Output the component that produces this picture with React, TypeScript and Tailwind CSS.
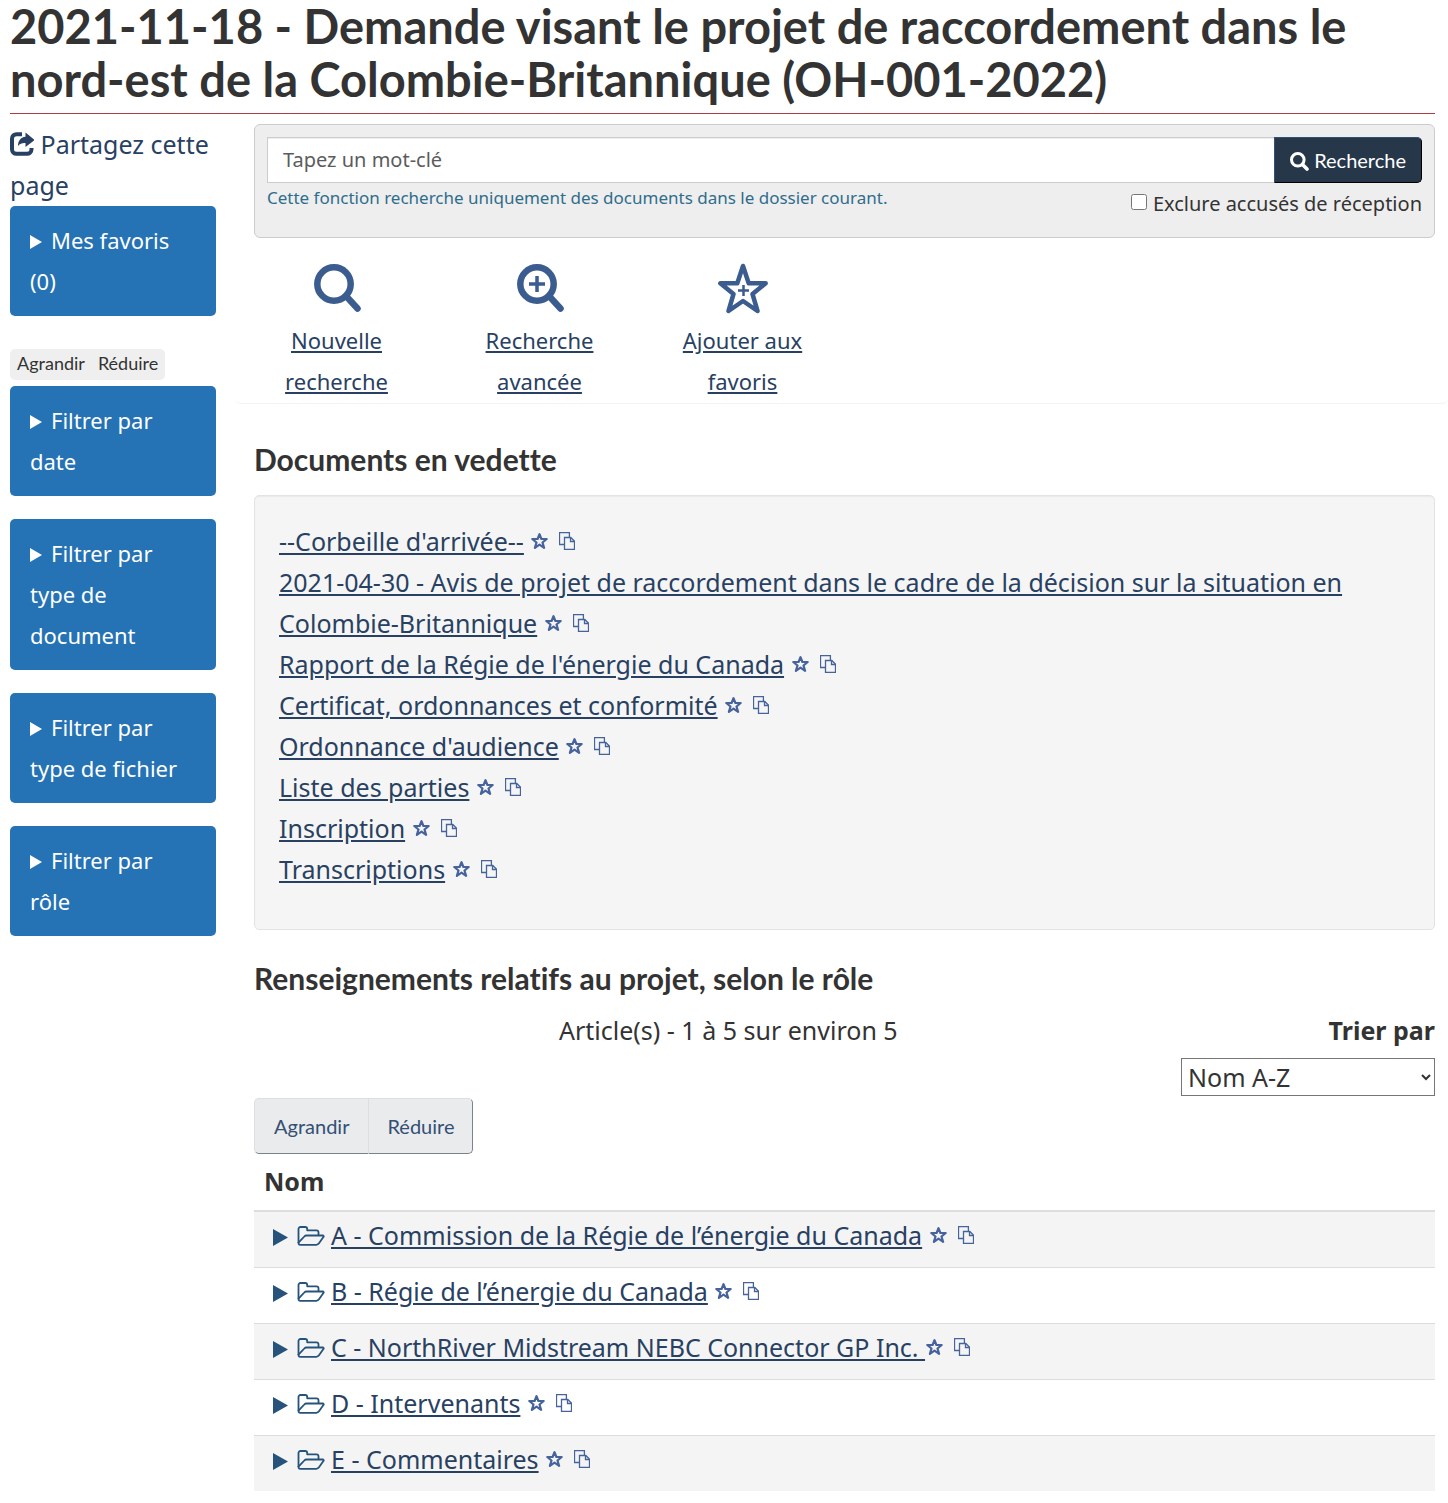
import type { ReactNode } from "react";

const documents = [
  "--Corbeille d'arrivée--",
  "2021-04-30 - Avis de projet de raccordement dans le cadre de la décision sur la situation en Colombie-Britannique",
  "Rapport de la Régie de l'énergie du Canada",
  "Certificat, ordonnances et conformité",
  "Ordonnance d'audience",
  "Liste des parties",
  "Inscription",
  "Transcriptions",
];

const folders = [
  "A - Commission de la Régie de l’énergie du Canada",
  "B - Régie de l’énergie du Canada",
  "C - NorthRiver Midstream NEBC Connector GP Inc. ",
  "D - Intervenants",
  "E - Commentaires",
];

const filters = [
  "Filtrer par date",
  "Filtrer par type de document",
  "Filtrer par type de fichier",
  "Filtrer par rôle",
];

function ShareIcon() {
  return (
    <svg viewBox="0 0 24 24" className="inline-block size-6 align-[-2px]" fill="none" aria-hidden="true">
      <path
        d="M12 2.200H6.500A4.500 4.500 0 0 0 2 6.700v10.600a4.500 4.500 0 0 0 4.500 4.500H17a4.500 4.500 0 0 0 4.500-4.500V16"
        stroke="currentColor"
        strokeWidth="4"
      />
      <path d="M15.500.5 24.500 8l-9 7v-4c-3.500-.2-5.300.5-7.500 3C8 9 10.500 5.200 15.500 4.800z" fill="currentColor" />
    </svg>
  );
}

function SearchIcon() {
  return (
    <svg viewBox="0 0 19 19" className="inline-block size-[19px] align-[-3px]" fill="none" stroke="currentColor" aria-hidden="true">
      <circle cx="7.800" cy="7.800" r="6.300" strokeWidth="3" />
      <path d="m12.500 12.500 4.500 4.500" strokeWidth="3.600" strokeLinecap="round" />
    </svg>
  );
}

function FolderIcon() {
  return (
    <svg
      viewBox="0 0 28 20"
      className="mr-[6px] inline-block h-5 w-7 align-[-1px]"
      fill="none"
      stroke="#26537c"
      strokeWidth="1.800"
      strokeLinejoin="round"
      aria-hidden="true"
    >
      <path d="M1.500 17V3a2 2 0 0 1 2-2h4.700a2 2 0 0 1 2 2v1.300h9.300a2 2 0 0 1 2 2v3" />
      <path d="M1.500 16.700 7.300 10.500a3 3 0 0 1 2.200-1h16.200c1 0 1.300.8.7 1.600L22 17.300a3.500 3.500 0 0 1-2.700 1.500h-16c-1 0-1.800-.8-1.800-2.100z" />
    </svg>
  );
}

function MagnifierIcon({ plus = false }: { plus?: boolean }) {
  return (
    <svg viewBox="0 0 48 50" className="h-[50px] w-12" fill="none" stroke="#3b5c8f" aria-hidden="true">
      <circle cx="21" cy="21" r="16.700" strokeWidth="6.500" />
      <path d="m33 33 11.500 12.500" strokeWidth="6.500" strokeLinecap="round" />
      {plus && <path d="M13 21h16M21 13v16" strokeWidth="3.500" />}
    </svg>
  );
}

function BigStarIcon() {
  return (
    <svg viewBox="0 0 52 52" className="size-[52px]" fill="none" stroke="#3b5c8f" aria-hidden="true">
      <path
        d="m26 3 5.700 17.300h17L35.500 31l5 17L26 38l-14.500 10 5-17L3.300 20.300h17z"
        strokeWidth="4.500"
        strokeLinejoin="round"
      />
      <path d="M21 27.500h11M26.500 22v11" strokeWidth="2.500" />
    </svg>
  );
}

function ItemActions() {
  return (
    <span className="ml-px inline-flex gap-[11px] align-[1px] text-[#46639c]">
      <button type="button" aria-label="Ajouter aux favoris">
        <svg viewBox="0 0 17 18" className="h-[18px] w-[17px]" fill="none" stroke="currentColor">
          <path
            d="m8.500 2.200 1.900 4.800h5.300l-4.200 3.500 1.600 5.300-4.600-3.100-4.600 3.100 1.600-5.300L1.300 7h5.300z"
            strokeWidth="2.200"
            strokeLinejoin="round"
          />
        </svg>
      </button>
      <button type="button" aria-label="Copier le lien">
        <svg viewBox="0 0 16 18" className="h-[18px] w-4" fill="none" stroke="currentColor" strokeWidth="1.300">
          <path d="M5.500 12.500h-5V.600h9.900v4.500" />
          <path d="M5.500 5.500h6.300l3.700 3.700v8.200h-10z" />
          <path d="M11.500 5.500v4h4" />
        </svg>
      </button>
    </span>
  );
}

function TextLink({ children }: { children: ReactNode }) {
  return (
    <a href="#" className="text-[#284162] underline">
      {children}
    </a>
  );
}

function SidePanel({ title }: { title: string }) {
  return (
    <details className="rounded-[5px] bg-[#2572b4] px-5 py-[14px] text-[22px] leading-[41px] text-white">
      <summary className="list-none">
        <svg viewBox="0 0 12 14" className="mr-[9px] inline-block h-[14px] w-3 align-[0px]" fill="currentColor" aria-hidden="true">
          <path d="M0 0v14l12-7z" />
        </svg>
        {title}
      </summary>
    </details>
  );
}

function Shortcut({ icon, label }: { icon: ReactNode; label: string }) {
  return (
    <a href="#" className="flex w-[203px] flex-col items-center px-10 text-center text-[22px] leading-[41px] text-[#284162]">
      <span className="flex h-[57px] items-start">{icon}</span>
      <span className="underline">{label}</span>
    </a>
  );
}

function SectionTitle({ children }: { children: ReactNode }) {
  return <h2 className="font-[Lato] text-3xl leading-[34px] font-bold [font-variant-ligatures:none]">{children}</h2>;
}

function Sidebar() {
  return (
    <aside className="w-[206px] shrink-0">
      <a href="#" className="block text-[#284162]">
        <ShareIcon /> Partagez cette page
      </a>
      <SidePanel title="Mes favoris (0)" />
      <div className="mt-[33px] mb-[6px] flex w-fit gap-[13px] rounded-[5px] bg-[#efefef] px-[7px] pb-[2px] font-[Lato] text-lg leading-[29px]">
        <button type="button">Agrandir</button>
        <button type="button">Réduire</button>
      </div>
      <div className="flex flex-col gap-[23px]">
        {filters.map((title) => (
          <SidePanel key={title} title={title} />
        ))}
      </div>
    </aside>
  );
}

function SearchForm() {
  return (
    <form className="rounded-md border border-[#ccc] bg-[#eee] p-3 pb-[13px] text-xl leading-[41px]">
      <div className="flex h-[46px]">
        <input
          type="search"
          aria-label="Tapez un mot-clé"
          placeholder="Tapez un mot-clé"
          className="min-w-0 flex-1 border border-r-0 border-[#ccc] bg-white px-[15px] leading-7 shadow-[inset_0_1px_1px_rgba(0,0,0,0.075)] placeholder:text-[#5c5c5c]"
        />
        <button
          type="submit"
          className="rounded-r-[5px] border border-t-[#335075] border-r-black border-b-black border-l-[#335075] bg-[#26374a] px-[15px] font-[Lato] leading-7 text-white"
        >
          <SearchIcon /> Recherche
        </button>
      </div>
      <div className="flex justify-between">
        <p className="text-[17px] leading-[29px] text-[#2f6d8c]">
          Cette fonction recherche uniquement des documents dans le dossier courant.
        </p>
        <label className="flex items-center gap-[6px]">
          <input type="checkbox" className="mb-1 size-4" />
          Exclure accusés de réception
        </label>
      </div>
    </form>
  );
}

export default function App() {
  return (
    <div className="bg-white pr-[13px] pb-3 pl-[10px] font-['Noto_Sans',sans-serif] text-[25px] leading-[41px] text-[#333]">
      <h1 className="border-b border-[#af3c43] pb-[7px] font-[Lato] text-[47px] leading-[53px] font-bold [font-variant-ligatures:none]">
        2021-11-18 - Demande visant le projet de raccordement dans le nord-est de la Colombie-Britannique (OH-001-2022)
      </h1>

      <div className="flex gap-[38px] pt-[10px]">
        <Sidebar />
        <main className="min-w-0 flex-1">
          <SearchForm />

          <nav className="-mr-[13px] -ml-[19px] flex rounded-md border-b border-[#f3f3f3] pt-[25px] pb-px">
            <Shortcut icon={<MagnifierIcon />} label="Nouvelle recherche" />
            <Shortcut icon={<MagnifierIcon plus />} label="Recherche avancée" />
            <Shortcut icon={<BigStarIcon />} label="Ajouter aux favoris" />
          </nav>

          <div className="mt-[38px]">
            <SectionTitle>Documents en vedette</SectionTitle>
          </div>
          <ul className="mt-[19px] rounded-[5px] border border-[#e3e3e3] bg-[#f5f5f5] px-6 pt-[25px] pb-[39px] shadow-[inset_0_1px_1px_rgba(0,0,0,0.05)]">
            {documents.map((name) => (
              <li key={name}>
                <TextLink>{name}</TextLink> <ItemActions />
              </li>
            ))}
          </ul>

          <div className="mt-[31px]">
            <SectionTitle>Renseignements relatifs au projet, selon le rôle</SectionTitle>
          </div>
          <div className="mt-[15px] grid grid-cols-[305px_1fr_254px]">
            <p className="col-start-2">Article(s) - 1 à 5 sur environ 5</p>
            <label htmlFor="sort" className="text-right font-bold">
              Trier par
            </label>
            <select
              id="sort"
              className="col-start-3 mt-[7px] h-[38px] border border-[#767676] bg-white px-[2px] leading-[34px]"
            >
              <option>Nom A-Z</option>
              <option>Nom Z-A</option>
            </select>
          </div>

          <div className="mt-[2px] flex w-fit font-[Lato] text-xl leading-[54px] text-[#335075]">
            <button
              type="button"
              className="rounded-l-[5px] border border-r-0 border-[#dcdee1] border-b-[#7c828a] bg-[#eaebed] px-[19px]"
            >
              Agrandir
            </button>
            <button
              type="button"
              className="rounded-r-[5px] border border-[#dcdee1] border-r-[#7c828a] border-b-[#7c828a] bg-[#eaebed] px-[18px]"
            >
              Réduire
            </button>
          </div>

          <table className="w-full border-collapse">
            <thead>
              <tr className="border-b-2 border-[#ddd]">
                <th className="px-[10px] pt-[7px] pb-2 text-left">Nom</th>
              </tr>
            </thead>
            <tbody>
              {folders.map((name) => (
                <tr key={name} className="border-b border-[#ddd] last:border-b-0 odd:bg-[#f4f4f4]">
                  <td className="px-[19px] pt-[3px] pb-[11px]">
                    <button type="button" aria-label="Ouvrir" className="mr-[9px] align-[-1px] text-[#26537c]">
                      <svg viewBox="0 0 15 17" className="h-[17px] w-[15px]" fill="currentColor">
                        <path d="M0 0v17l15-8.500z" />
                      </svg>
                    </button>
                    <FolderIcon />
                    <TextLink>{name}</TextLink> <ItemActions />
                  </td>
                </tr>
              ))}
            </tbody>
          </table>
        </main>
      </div>
    </div>
  );
}
